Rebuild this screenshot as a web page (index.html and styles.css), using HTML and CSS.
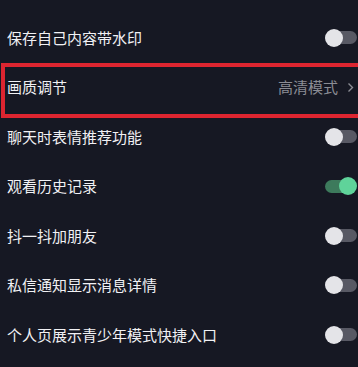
FILE: index.html
```html
<!DOCTYPE html>
<html lang="zh">
<head>
<meta charset="utf-8">
<link rel="stylesheet" href="styles.css">
</head>
<body>
<ul class="list">
  <li class="row"><span class="label">保存自己内容带水印</span><span class="toggle"></span></li>
  <li class="row row-marked"><span class="label">画质调节</span><span class="value">高清模式<svg class="chev" width="7" height="11" viewBox="0 0 7 11"><polyline points="1.5,1.5 5.5,5.5 1.5,9.5" fill="none" stroke="#8b8c94" stroke-width="1.4"/></svg></span></li>
  <li class="row"><span class="label">聊天时表情推荐功能</span><span class="toggle"></span></li>
  <li class="row"><span class="label">观看历史记录</span><span class="toggle on"></span></li>
  <li class="row"><span class="label">抖一抖加朋友</span><span class="toggle"></span></li>
  <li class="row"><span class="label">私信通知显示消息详情</span><span class="toggle"></span></li>
  <li class="row"><span class="label">个人页展示青少年模式快捷入口</span><span class="toggle"></span></li>
</ul>
</body>
</html>
```
FILE: styles.css
```css
html, body {
  margin: 0;
  padding: 0;
  background: #161823;
  overflow: hidden;
}
body {
  width: 358px;
  height: 367px;
  font-family: "Noto Sans CJK SC", "Noto Sans", sans-serif;
}
.list {
  list-style: none;
  margin: 0;
  padding: 13px 1px 0 7px;
}
.row {
  position: relative;
  height: 49.5px;
  display: flex;
  align-items: center;
  justify-content: space-between;
}
.label {
  color: #f1f1f4;
  font-size: 15px;
  line-height: 20px;
}
.value {
  display: flex;
  align-items: center;
  gap: 9px;
  color: #8b8c94;
  font-size: 15px;
  line-height: 20px;
  padding-right: 3px;
}
.chev {
  display: block;
}
.row-marked::after {
  content: "";
  position: absolute;
  top: 0;
  left: -6px;
  right: -6px;
  height: 55px;
  border: 4px solid #dd2530;
  box-sizing: border-box;
  pointer-events: none;
}
.toggle {
  position: relative;
  width: 32px;
  height: 18px;
  flex: none;
}
.toggle::before {
  content: "";
  position: absolute;
  left: 2px;
  right: 0;
  top: 2.5px;
  height: 13px;
  border-radius: 7px;
  background: #585964;
}
.toggle::after {
  content: "";
  position: absolute;
  left: 0;
  top: 0;
  width: 18px;
  height: 18px;
  border-radius: 50%;
  background: #e4e4e8;
}
.toggle.on::before {
  left: 0;
  right: 2px;
  background: #3d7a5c;
}
.toggle.on::after {
  left: auto;
  right: 0;
  background: #5fd39a;
}
```
